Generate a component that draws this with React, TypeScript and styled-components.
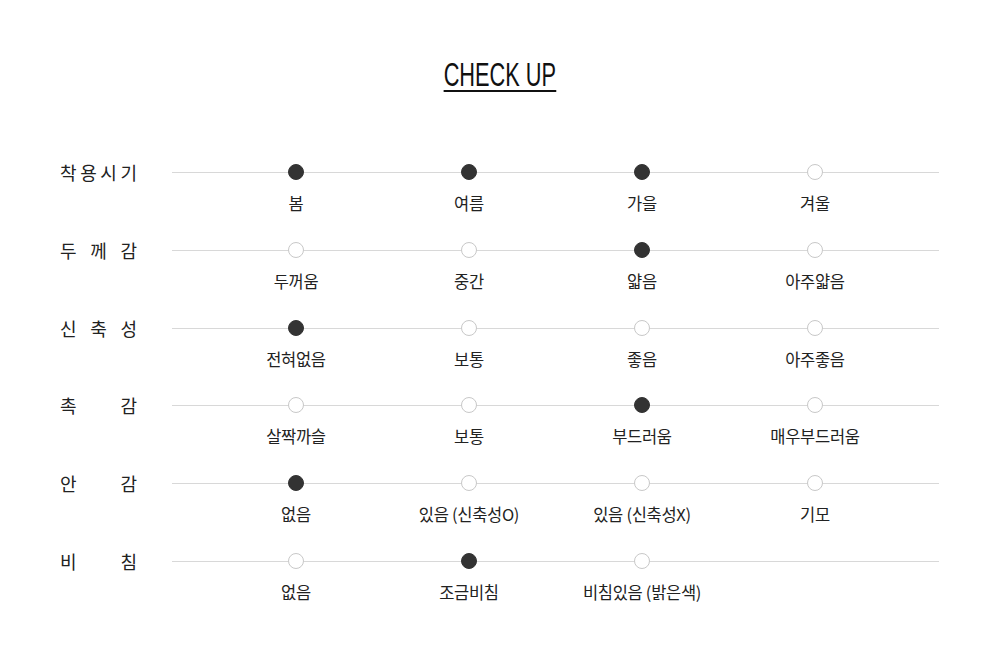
import { createGlobalStyle, styled } from "styled-components";

const GlobalStyle = createGlobalStyle`
  body {
    margin: 0;
    background: #fff;
    font-family: "Noto Sans CJK KR", "Noto Sans", sans-serif;
    color: #222;
  }
`;

const Page = styled.div`
  width: 1000px;
  height: 661px;
  padding-top: 59px;
  box-sizing: border-box;
`;

const TitleWrap = styled.div`
  display: flex;
  justify-content: center;
  margin-bottom: 72px;
`;

const Title = styled.h2`
  margin: 0;
  font-family: "Liberation Sans Narrow", "Liberation Sans", sans-serif;
  font-weight: 400;
  font-size: 34px;
  line-height: 30px;
  color: #111;
  border-bottom: 2px solid #111;
  padding-bottom: 1px;
  transform: scaleX(0.64);
`;

const List = styled.div`
  display: flex;
  flex-direction: column;
  gap: 27.8px;
  padding: 0 61px 0 60px;
`;

const Row = styled.div`
  display: grid;
  grid-template-columns: 77px 1fr;
  column-gap: 35px;
`;

const Label = styled.div`
  height: 16px;
  display: flex;
  align-items: center;
  justify-content: space-between;
  font-size: 18px;
  color: #222;
`;

const Track = styled.div`
  position: relative;
  display: grid;
  grid-template-columns: repeat(4, 173px);
  justify-content: center;

  &::before {
    content: "";
    position: absolute;
    left: 0;
    right: 0;
    top: 8px;
    height: 1px;
    background: #d8d8d8;
  }
`;

const Option = styled.div`
  display: flex;
  flex-direction: column;
  align-items: center;
`;

const Dot = styled.span<{ $on: boolean }>`
  position: relative;
  width: 16px;
  height: 16px;
  box-sizing: border-box;
  border-radius: 50%;
  background: ${(p) => (p.$on ? "#333" : "#fff")};
  border: 1px solid ${(p) => (p.$on ? "#333" : "#c8c8c8")};
`;

const Value = styled.span`
  margin-top: 12px;
  font-size: 16.5px;
  line-height: 22px;
  letter-spacing: -0.3px;
  color: #222;
  white-space: nowrap;
`;

const rows = [
  { label: "착용시기", options: ["봄", "여름", "가을", "겨울"], on: [0, 1, 2] },
  { label: "두께감", options: ["두꺼움", "중간", "얇음", "아주얇음"], on: [2] },
  { label: "신축성", options: ["전혀없음", "보통", "좋음", "아주좋음"], on: [0] },
  { label: "촉감", options: ["살짝까슬", "보통", "부드러움", "매우부드러움"], on: [2] },
  { label: "안감", options: ["없음", "있음 (신축성O)", "있음 (신축성X)", "기모"], on: [0] },
  { label: "비침", options: ["없음", "조금비침", "비침있음 (밝은색)"], on: [1] },
];

export default function App() {
  return (
    <Page>
      <GlobalStyle />
      <TitleWrap>
        <Title>CHECK UP</Title>
      </TitleWrap>
      <List>
        {rows.map((row) => (
          <Row key={row.label}>
            <Label>
              {row.label.split("").map((ch, i) => (
                <span key={i}>{ch}</span>
              ))}
            </Label>
            <Track>
              {row.options.map((opt, i) => (
                <Option key={opt + i}>
                  <Dot $on={row.on.includes(i)} />
                  <Value>{opt}</Value>
                </Option>
              ))}
            </Track>
          </Row>
        ))}
      </List>
    </Page>
  );
}
